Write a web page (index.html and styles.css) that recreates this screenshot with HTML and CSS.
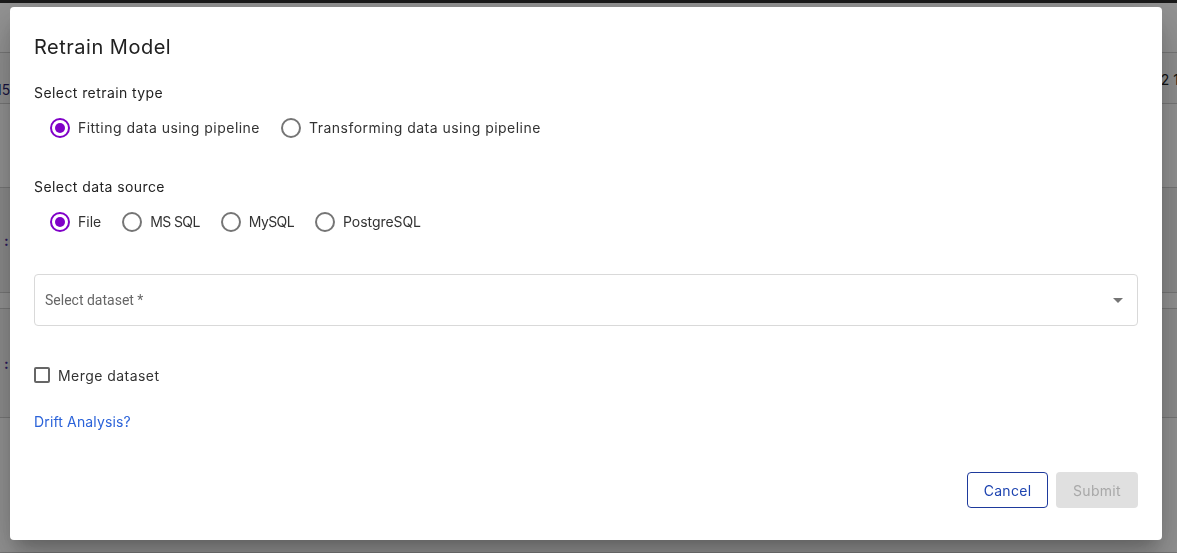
FILE: index.html
```html
<!DOCTYPE html>
<html lang="en">
<head>
<meta charset="utf-8">
<title>Retrain Model</title>
<link rel="stylesheet" href="styles.css">
</head>
<body>
<div class="page">
  <div class="topbar"></div>
  <div class="bg-row r1"><span></span><span class="bg-right"></span></div>
  <div class="bg-row r2"><span class="bg-left low">15</span><span class="bg-right">2 1.</span></div>
  <div class="bg-row r3"></div>
  <div class="bg-row r4"><span class="bg-left dots">:</span><span></span></div>
  <div class="bg-row r5"></div>
  <div class="bg-row r6"><span class="bg-left dots">:</span><span></span></div>
  <div class="bg-row r7"></div>
</div>

<div class="overlay">
  <div class="dialog">
    <h2 class="title">Retrain Model</h2>

    <div class="field-label">Select retrain type</div>
    <div class="radio-group">
      <label class="radio checked"><span class="circle"></span><span class="ls-wide">Fitting data using pipeline</span></label>
      <label class="radio"><span class="circle"></span><span class="ls-wide">Transforming data using pipeline</span></label>
    </div>

    <div class="field-label second">Select data source</div>
    <div class="radio-group">
      <label class="radio checked"><span class="circle"></span><span class="ls-file">File</span></label>
      <label class="radio"><span class="circle"></span><span class="ls-caps">MS SQL</span></label>
      <label class="radio"><span class="circle"></span><span class="ls-caps">MySQL</span></label>
      <label class="radio"><span class="circle"></span><span class="ls-mixed">PostgreSQL</span></label>
    </div>

    <div class="select">
      <span class="placeholder">Select dataset *</span>
      <svg class="arrow" width="10" height="5" viewBox="0 0 10 5"><path d="M0 0 L10 0 L5 5 Z" fill="rgba(0,0,0,0.54)"/></svg>
    </div>

    <label class="checkbox"><span class="box"></span><span>Merge dataset</span></label>

    <a class="link" href="#">Drift Analysis?</a>

    <div class="actions">
      <button class="btn cancel">Cancel</button>
      <button class="btn submit" disabled>Submit</button>
    </div>
  </div>
</div>
</body>
</html>
```

FILE: styles.css
```css
* { box-sizing: border-box; }

html, body {
  margin: 0;
  padding: 0;
  height: 100%;
  overflow: hidden;
}

body {
  font-family: "Inter", "Noto Sans", sans-serif;
  background: #f4f5f7;
}

.page {
  display: flex;
  flex-direction: column;
  height: 100%;
}

.topbar {
  height: 3px;
  background: #2c2c2c;
}

.bg-row {
  display: flex;
  justify-content: space-between;
  align-items: center;
  border-bottom: 1px solid #cfcfcf;
  background: #ffffff;
  font-size: 14px;
  color: #222;
}

.r1 { height: 50px; }
.r2 { height: 51px; background: #fafafa; align-items: flex-start; padding-top: 18px; }
.r3 { height: 84px; }
.r4 { height: 105px; background: #f2f2f2; }
.r5 { height: 16px; }
.r6 { height: 109px; background: #f6f6f6; }
.r7 { flex: 1; }

.bg-left { margin-left: -4px; color: #2a1f6e; }
.bg-left.low { margin-top: 10px; }
.bg-right { margin-right: -6px; color: #222; }
.dots { margin-left: 4px; color: #4b2aa0; font-weight: 700; }

.overlay {
  position: fixed;
  inset: 0;
  background: rgba(0, 0, 0, 0.42);
  padding: 7px 15px 13px 10px;
  display: flex;
}

.dialog {
  flex: 1;
  background: #fff;
  border-radius: 4px;
  box-shadow: 0 11px 15px -7px rgba(0,0,0,0.2), 0 24px 38px 3px rgba(0,0,0,0.14), 0 9px 46px 8px rgba(0,0,0,0.12);
  padding: 24px 24px 32px 24px;
  display: flex;
  flex-direction: column;
  align-items: flex-start;
}

.title {
  margin: 0;
  font-size: 20px;
  line-height: 32px;
  font-weight: 400;
  color: #212121;
  letter-spacing: 0.5px;
}

.field-label {
  margin-top: 20px;
  font-size: 14px;
  line-height: 20px;
  color: #222;
  letter-spacing: 0.42px;
}

.field-label.second { margin-top: 28px; }

.radio-group {
  display: flex;
  gap: 21px;
  margin-top: 4px;
  height: 42px;
  align-items: center;
  padding-left: 16px;
}

.radio {
  display: flex;
  align-items: center;
  gap: 8px;
  font-size: 14px;
  line-height: 20px;
  color: #333;
  letter-spacing: 0.25px;
}

.ls-wide { letter-spacing: 0.47px; }
.ls-file { letter-spacing: 0; }
.ls-caps { letter-spacing: -0.6px; }
.ls-mixed { letter-spacing: -0.05px; }

.circle {
  width: 20px;
  height: 20px;
  border-radius: 50%;
  border: 2px solid #757575;
  display: flex;
  align-items: center;
  justify-content: center;
}

.radio.checked .circle {
  border-color: #8000c8;
}

.radio.checked .circle::after {
  content: "";
  width: 10px;
  height: 10px;
  border-radius: 50%;
  background: #8000c8;
}

.select {
  margin-top: 31px;
  align-self: stretch;
  height: 52px;
  border: 1px solid #d9d9d9;
  border-radius: 4px;
  display: flex;
  align-items: center;
  justify-content: space-between;
  padding: 0 14px 0 10px;
}

.placeholder {
  font-family: "Roboto", sans-serif;
  font-size: 14px;
  color: #666;
}

.arrow { display: block; }

.checkbox {
  margin-top: 28px;
  display: flex;
  align-items: center;
  gap: 8px;
  height: 42px;
  font-size: 14px;
  color: #333;
  letter-spacing: 0.45px;
}

.box {
  width: 16px;
  height: 16px;
  border: 2px solid #666;
  border-radius: 2px;
}

.link {
  margin-top: 16px;
  font-size: 14px;
  line-height: 20px;
  color: #2a62d9;
  text-decoration: none;
  letter-spacing: 0.15px;
}

.actions {
  margin-top: auto;
  align-self: stretch;
  display: flex;
  justify-content: flex-end;
  gap: 8px;
}

.btn {
  font-family: "Inter", "Noto Sans", sans-serif;
  font-size: 14px;
  height: 36px;
  border-radius: 4px;
  padding: 0 15px;
  letter-spacing: 0.3px;
}

.cancel {
  width: 81px;
  background: #fff;
  border: 1px solid #1e3a9c;
  color: #1e44b0;
}

.submit {
  width: 82px;
  background: #e0e0e0;
  border: none;
  color: #a8a8a8;
}
```
